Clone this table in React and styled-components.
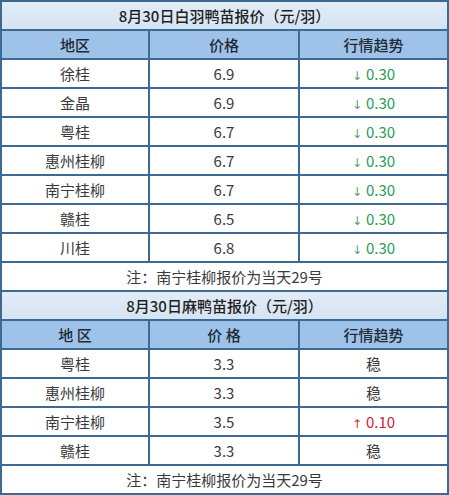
import styled, { createGlobalStyle } from 'styled-components';

const GlobalStyle = createGlobalStyle`
  body {
    margin: 0;
    background: #ffffff;
  }
`;

const white = [
  { area: '徐桂', price: '6.9', trend: 'down', value: '0.30' },
  { area: '金晶', price: '6.9', trend: 'down', value: '0.30' },
  { area: '粤桂', price: '6.7', trend: 'down', value: '0.30' },
  { area: '惠州桂柳', price: '6.7', trend: 'down', value: '0.30' },
  { area: '南宁桂柳', price: '6.7', trend: 'down', value: '0.30' },
  { area: '赣桂', price: '6.5', trend: 'down', value: '0.30' },
  { area: '川桂', price: '6.8', trend: 'down', value: '0.30' },
];

const ma = [
  { area: '粤桂', price: '3.3', trend: 'flat' },
  { area: '惠州桂柳', price: '3.3', trend: 'flat' },
  { area: '南宁桂柳', price: '3.5', trend: 'up', value: '0.10' },
  { area: '赣桂', price: '3.3', trend: 'flat' },
];

const Trend = ({ row }) => {
  if (row.trend === 'flat') return <span>稳</span>;
  const up = row.trend === 'up';
  return (
    <Change up={up}>
      <Arrow up={up}>{up ? '↑' : '↓'}</Arrow>
      {row.value}
    </Change>
  );
};

const Section = ({ title, head, rows }) => (
  <>
    <tr>
      <TitleCell colSpan={3}>{title}</TitleCell>
    </tr>
    <tr>
      {head.map((h) => (
        <HeadCell key={h}>{h}</HeadCell>
      ))}
    </tr>
    {rows.map((r) => (
      <tr key={r.area}>
        <Cell>{r.area}</Cell>
        <Cell>{r.price}</Cell>
        <Cell>
          <Trend row={r} />
        </Cell>
      </tr>
    ))}
    <tr>
      <Cell colSpan={3}>注：南宁桂柳报价为当天29号</Cell>
    </tr>
  </>
);

const App = () => (
  <>
    <GlobalStyle />
    <Table>
      <colgroup>
        <col style={{ width: 148 }} />
        <col style={{ width: 150 }} />
        <col style={{ width: 149 }} />
      </colgroup>
      <tbody>
        <Section
          title="8月30日白羽鸭苗报价（元/羽）"
          head={['地区', '价格', '行情趋势']}
          rows={white}
        />
        <Section
          title="8月30日麻鸭苗报价（元/羽）"
          head={['地 区', '价 格', '行情趋势']}
          rows={ma}
        />
      </tbody>
    </Table>
  </>
);

export default App;

const Table = styled.table`
  width: 447px;
  table-layout: fixed;
  border-collapse: collapse;
  font-family: 'Noto Sans CJK SC', 'Noto Sans', sans-serif;
  font-size: 15px;
  color: #3a3a3a;
`;

const Cell = styled.td`
  height: 27px;
  padding: 0;
  border: 2px solid #3d6a92;
  text-align: center;
  vertical-align: middle;
  line-height: 18px;
  background: #ffffff;
`;

const TitleCell = styled(Cell)`
  background: linear-gradient(#e2ecf7, #d5e3f2);
  color: #1f1f1f;
  font-weight: 500;
`;

const HeadCell = styled(Cell)`
  background: #9ec2e8;
  color: #1f2a36;
  font-weight: 500;
`;

const Change = styled.span`
  color: ${({ up }) => (up ? '#d3213c' : '#2a9e55')};
`;

const Arrow = styled.span`
  font-family: 'DejaVu Sans', sans-serif;
  font-size: 12px;
  line-height: 10px;
  margin-right: 4px;
  color: ${({ up }) => (up ? '#c0392b' : '#4aa56b')};
`;
